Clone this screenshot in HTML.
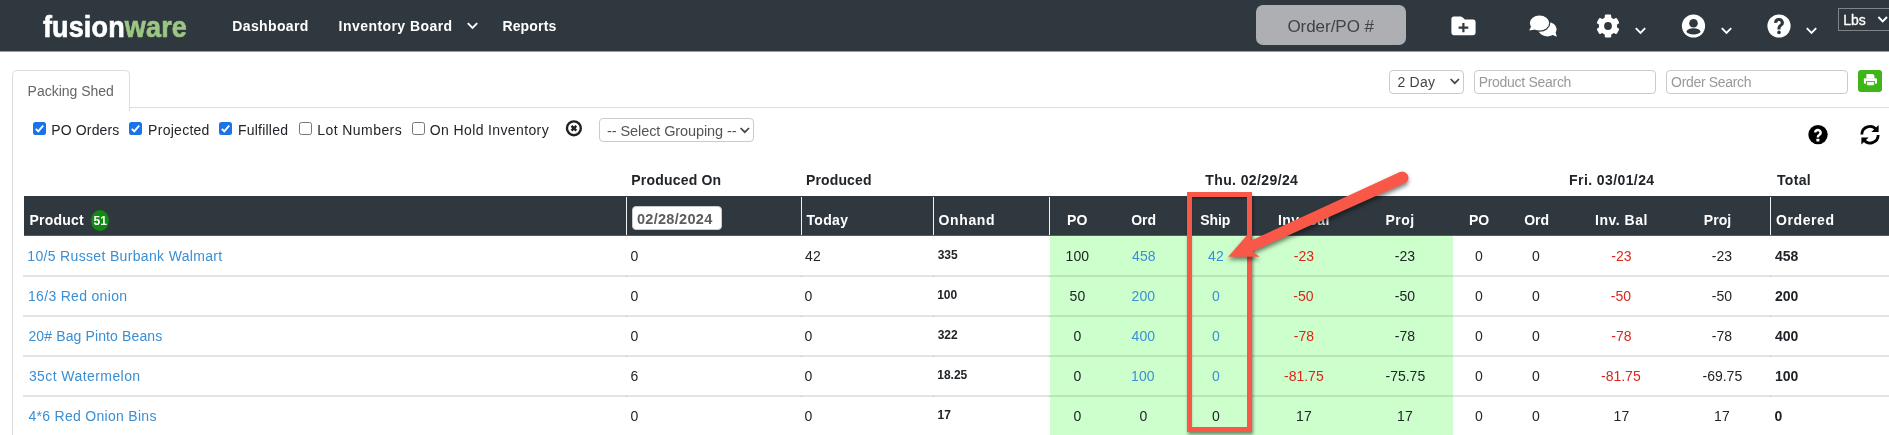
<!DOCTYPE html>
<html><head><meta charset="utf-8"><title>Inventory Board</title>
<style>
*{box-sizing:border-box;margin:0;padding:0}
html,body{width:1889px;height:435px;overflow:hidden;background:#fff}
body{font-family:"Liberation Sans",sans-serif;font-size:14px;color:#212529;position:relative;opacity:.999}
.a{position:absolute}
.t{position:absolute;line-height:16px;white-space:nowrap}
.box{position:absolute;border:1px solid #cbcbcb;border-radius:4px;background:#fff}
.rl{position:absolute;left:23px;width:1866px;height:2px;background:#e4e4e4}
.vs{position:absolute;top:197px;width:1px;height:38px;background:#f2f2f2}
.cb{position:absolute;top:122px;width:13px;height:13px;border-radius:2.5px}
.cb.on{background:#1a73e8}
.cb.off{border:1px solid #767676;background:#fff}
#lg span{color:#9cc683;-webkit-text-stroke-color:#9cc683}
</style></head><body>
<div class="a" style="left:0;top:0;width:1889px;height:52px;background:#9a9da0"></div>
<div class="a" style="left:0;top:0;width:1889px;height:51px;background:#2f383e"></div>
<svg class="a" style="left:466px;top:21px" width="13" height="10" viewBox="0 0 13 10"><path d="M1.8 2.2 L6.5 6.9 L11.2 2.2" fill="none" stroke="#fff" stroke-width="1.9"/></svg>
<div class="a" style="left:1256px;top:5px;width:150px;height:40px;background:#adafb2;border-radius:7px"></div>
<!-- nav icons -->
<svg class="a" style="left:1451px;top:16px" width="26" height="20" viewBox="1451 16 26 20"><path d="M1453.9 16.4 H1460.6 Q1461.6 16.4 1462.4 17.2 L1464.9 19.6 H1473.2 Q1475.6 19.6 1475.6 22 V32.8 Q1475.6 35.2 1473.2 35.2 H1453.8 Q1451.4 35.2 1451.4 32.8 V18.9 Q1451.4 16.4 1453.9 16.4 Z" fill="#fff"/><path d="M1463.4 22.9 V32.2 M1458.6 27.6 H1468.3" stroke="#2f383e" stroke-width="2.2"/></svg>
<svg class="a" style="left:1528px;top:14px" width="31" height="24" viewBox="1528 14 31 24"><ellipse cx="1547.4" cy="29.2" rx="9.2" ry="7.2" fill="#fff"/><path d="M1551.5 34.5 L1556.9 36.7 L1555.2 31.5 Z" fill="#fff"/><ellipse cx="1539.5" cy="23" rx="10.9" ry="8.7" fill="#2f383e"/><ellipse cx="1539.5" cy="23" rx="9.7" ry="7.5" fill="#fff"/><path d="M1531.2 26.2 L1529.2 30.6 L1535.2 29.6 Z" fill="#fff"/></svg>
<svg class="a" style="left:1596px;top:14px" width="24" height="24" viewBox="0 0 24 24"><g fill="#fff"><circle cx="12" cy="12" r="9.1"/><rect x="8.8" y="0.5" width="6.4" height="23" rx="1.3"/><rect x="8.8" y="0.5" width="6.4" height="23" rx="1.3" transform="rotate(60 12 12)"/><rect x="8.8" y="0.5" width="6.4" height="23" rx="1.3" transform="rotate(120 12 12)"/></g><circle cx="12" cy="12" r="3.9" fill="#2f383e"/></svg>
<svg class="a" style="left:1634px;top:26px" width="13" height="10" viewBox="0 0 13 10"><path d="M1.8 2.2 L6.5 6.9 L11.2 2.2" fill="none" stroke="#fff" stroke-width="1.9"/></svg>
<svg class="a" style="left:1681px;top:14px" width="25" height="24" viewBox="-0.5 0 25 24"><circle cx="12" cy="12" r="11.6" fill="#fff"/><circle cx="12" cy="9.3" r="4.3" fill="#2f383e"/><ellipse cx="12" cy="17.4" rx="6.9" ry="3.1" fill="#2f383e"/></svg>
<svg class="a" style="left:1719.5px;top:26px" width="13" height="10" viewBox="0 0 13 10"><path d="M1.8 2.2 L6.5 6.9 L11.2 2.2" fill="none" stroke="#fff" stroke-width="1.9"/></svg>
<svg class="a" style="left:1767px;top:14px" width="24" height="24" viewBox="0 0 24 24"><circle cx="12" cy="12" r="11.6" fill="#fff"/><path d="M8.7 8.9 A3.3 3.2 0 1 1 13.6 11.5 Q12 12.5 12 14 V15.4" fill="none" stroke="#2f383e" stroke-width="3.1"/><circle cx="12" cy="18.4" r="1.8" fill="#2f383e"/></svg>
<svg class="a" style="left:1805.3px;top:26px" width="13" height="10" viewBox="0 0 13 10"><path d="M1.8 2.2 L6.5 6.9 L11.2 2.2" fill="none" stroke="#fff" stroke-width="1.9"/></svg>
<div class="a" style="left:1838px;top:8px;width:60px;height:23px;border:1px solid #7f8489;background:#2f383e"></div>
<svg class="a" style="left:1877px;top:15px" width="12" height="9" viewBox="0 0 12 9"><path d="M1.4 2 L5.7 6.3 L10 2" fill="none" stroke="#fff" stroke-width="1.9"/></svg>

<!-- tab -->
<div class="a" style="left:12px;top:107px;width:1877px;height:1px;background:#dddddd"></div>
<div class="a" style="left:12px;top:107px;width:1px;height:330px;background:#dddddd"></div>
<div class="a" style="left:12px;top:70px;width:118px;height:41px;border:1px solid #dddddd;border-bottom:none;border-radius:5px 5px 0 0;background:#fff"></div>

<!-- search row -->
<div class="box" style="left:1389px;top:70px;width:75px;height:24px"></div>
<svg class="a" style="left:1449px;top:77px" width="12" height="9" viewBox="0 0 12 9"><path d="M1.6 2 L5.8 6.2 L10 2" fill="none" stroke="#444" stroke-width="1.7"/></svg>
<div class="box" style="left:1474px;top:70px;width:182px;height:24px"></div>
<div class="box" style="left:1666px;top:70px;width:182px;height:24px"></div>
<div class="a" style="left:1858px;top:70px;width:24px;height:22px;background:#3fb618;border-radius:3px"></div>
<svg class="a" style="left:1863px;top:73px" width="15" height="14" viewBox="1863 73 15 14"><path d="M1866.4 73.9 H1872.9 L1874.4 75.4 V78.4 H1866.4 Z" fill="#fff"/><rect x="1863.9" y="78.2" width="13.1" height="5.6" rx="1.1" fill="#fff"/><rect x="1866.4" y="81.6" width="8" height="4.2" fill="#fff" stroke="#3fb618" stroke-width="1"/></svg>

<!-- checkboxes -->
<div class="cb on" style="left:33px"></div>
<div class="cb on" style="left:129px"></div>
<div class="cb on" style="left:219px"></div>
<div class="cb off" style="left:299px"></div>
<div class="cb off" style="left:412px"></div>
<svg class="a" style="left:33px;top:122px" width="13" height="13" viewBox="0 0 13 13"><path d="M2.8 6.8 L5.3 9.3 L10.2 3.6" fill="none" stroke="#fff" stroke-width="1.9"/></svg>
<svg class="a" style="left:129px;top:122px" width="13" height="13" viewBox="0 0 13 13"><path d="M2.8 6.8 L5.3 9.3 L10.2 3.6" fill="none" stroke="#fff" stroke-width="1.9"/></svg>
<svg class="a" style="left:219px;top:122px" width="13" height="13" viewBox="0 0 13 13"><path d="M2.8 6.8 L5.3 9.3 L10.2 3.6" fill="none" stroke="#fff" stroke-width="1.9"/></svg>
<svg class="a" style="left:565px;top:119px" width="18" height="18" viewBox="565 119 18 18"><circle cx="573.9" cy="128.3" r="6.95" fill="#fff" stroke="#222" stroke-width="2.4"/><path d="M571.5 125.9 L576.3 130.7 M576.3 125.9 L571.5 130.7" stroke="#222" stroke-width="2.4"/></svg>
<div class="box" style="left:599px;top:118px;width:155px;height:24px"></div>
<svg class="a" style="left:739px;top:126px" width="12" height="9" viewBox="0 0 12 9"><path d="M1.6 2 L5.8 6.2 L10 2" fill="none" stroke="#444" stroke-width="1.7"/></svg>

<!-- right icons -->
<svg class="a" style="left:1807px;top:123px" width="23" height="23" viewBox="1807 123 23 23"><circle cx="1818" cy="134.65" r="9.7" fill="#000"/><path d="M1815.2 132.6 A2.7 2.6 0 1 1 1819.2 134.9 Q1817.9 135.7 1817.9 136.8 V137.4" fill="none" stroke="#fff" stroke-width="2.4"/><rect x="1816.4" y="138.7" width="3" height="2.8" rx="0.5" fill="#fff"/></svg>
<svg class="a" style="left:1859px;top:123px" width="23" height="23" viewBox="1859 123 23 23"><path d="M1861.8 134.5 A8.1 8.1 0 0 1 1876.4 129.8" fill="none" stroke="#000" stroke-width="2.8"/><path d="M1878.6 124.9 V132.1 H1871.4 Z" fill="#000"/><path d="M1878.2 135 A8.1 8.1 0 0 1 1863.6 139.7" fill="none" stroke="#000" stroke-width="2.8"/><path d="M1861.4 144.6 V137.4 H1868.6 Z" fill="#000"/></svg>

<!-- table header -->
<div class="a" style="left:24px;top:196px;width:1865px;height:40px;background:#555d62"></div>
<div class="a" style="left:24px;top:196px;width:1865px;height:39px;background:#2f383e"></div>
<div class="a" style="left:91px;top:209.7px;width:18px;height:21px;border-radius:9px/10.5px;background:#128912"></div>
<div class="vs" style="left:626px"></div>
<div class="vs" style="left:801px"></div>
<div class="vs" style="left:933px"></div>
<div class="vs" style="left:1049px"></div>
<div class="vs" style="left:1770px"></div>
<div class="a" style="left:632px;top:206px;width:90px;height:24px;background:#fff;border:1px solid #ccc;border-radius:4px"></div>

<!-- rows -->
<div class="a" style="left:1050px;top:236px;width:402.5px;height:200px;background:#ccffcc"></div>
<div class="rl" style="top:275px"></div>
<div class="rl" style="top:315px"></div>
<div class="rl" style="top:355px"></div>
<div class="rl" style="top:395px"></div>
<div class="a" style="left:1050px;top:275px;width:402.5px;height:2px;background:#b8e6b8"></div>
<div class="a" style="left:1050px;top:315px;width:402.5px;height:2px;background:#b8e6b8"></div>
<div class="a" style="left:1050px;top:355px;width:402.5px;height:2px;background:#b8e6b8"></div>
<div class="a" style="left:1050px;top:395px;width:402.5px;height:2px;background:#b8e6b8"></div>
<div class="a" style="left:626px;top:275.5px;width:1px;height:1px;background:#bdbdbd"></div>
<div class="a" style="left:801px;top:275.5px;width:1px;height:1px;background:#bdbdbd"></div>
<div class="a" style="left:933px;top:275.5px;width:1px;height:1px;background:#bdbdbd"></div>
<div class="a" style="left:1049px;top:275.5px;width:1px;height:1px;background:#bdbdbd"></div>
<div class="a" style="left:1770px;top:275.5px;width:1px;height:1px;background:#bdbdbd"></div>
<div class="a" style="left:626px;top:315.5px;width:1px;height:1px;background:#bdbdbd"></div>
<div class="a" style="left:801px;top:315.5px;width:1px;height:1px;background:#bdbdbd"></div>
<div class="a" style="left:933px;top:315.5px;width:1px;height:1px;background:#bdbdbd"></div>
<div class="a" style="left:1049px;top:315.5px;width:1px;height:1px;background:#bdbdbd"></div>
<div class="a" style="left:1770px;top:315.5px;width:1px;height:1px;background:#bdbdbd"></div>
<div class="a" style="left:626px;top:355.5px;width:1px;height:1px;background:#bdbdbd"></div>
<div class="a" style="left:801px;top:355.5px;width:1px;height:1px;background:#bdbdbd"></div>
<div class="a" style="left:933px;top:355.5px;width:1px;height:1px;background:#bdbdbd"></div>
<div class="a" style="left:1049px;top:355.5px;width:1px;height:1px;background:#bdbdbd"></div>
<div class="a" style="left:1770px;top:355.5px;width:1px;height:1px;background:#bdbdbd"></div>
<div class="a" style="left:626px;top:395.5px;width:1px;height:1px;background:#bdbdbd"></div>
<div class="a" style="left:801px;top:395.5px;width:1px;height:1px;background:#bdbdbd"></div>
<div class="a" style="left:933px;top:395.5px;width:1px;height:1px;background:#bdbdbd"></div>
<div class="a" style="left:1049px;top:395.5px;width:1px;height:1px;background:#bdbdbd"></div>
<div class="a" style="left:1770px;top:395.5px;width:1px;height:1px;background:#bdbdbd"></div>

<div class="t" id="lg" style="left:42.90px;top:19.54px;font-size:27px;color:#fff;font-weight:bold;-webkit-text-stroke:0.6px #fff;transform:scaleY(1.10);transform-origin:0 17.36px;letter-spacing:0.160px;">fusion<span>ware</span></div>
<div class="t" id="bdg" style="left:93.50px;top:212.84px;font-size:12px;color:#fff;font-weight:bold;">51</div>
<div class="t" id="n1" style="left:232.30px;top:17.75px;font-size:14px;color:#fff;font-weight:bold;letter-spacing:0.360px;">Dashboard</div>
<div class="t" id="n2" style="left:338.60px;top:17.75px;font-size:14px;color:#fff;font-weight:bold;letter-spacing:0.444px;">Inventory Board</div>
<div class="t" id="n3" style="left:502.40px;top:17.75px;font-size:14px;color:#fff;font-weight:bold;letter-spacing:0.165px;">Reports</div>
<div class="t" id="opo" style="left:1287.40px;top:18.91px;font-size:17px;color:#3d4349;letter-spacing:-0.040px;">Order/PO #</div>
<div class="t" id="lbs" style="left:1843.20px;top:12.15px;font-size:14px;color:#fff;-webkit-text-stroke:0.3px #fff;">Lbs</div>
<div class="t" id="tab" style="left:27.60px;top:83.35px;font-size:14px;color:#666;letter-spacing:-0.008px;">Packing Shed</div>
<div class="t" id="s1" style="left:1397.40px;top:74.45px;font-size:14px;color:#444;letter-spacing:0.248px;">2 Day</div>
<div class="t" id="s2" style="left:1478.70px;top:73.95px;font-size:14px;color:#999;letter-spacing:-0.291px;">Product Search</div>
<div class="t" id="s3" style="left:1671.10px;top:73.95px;font-size:14px;color:#999;letter-spacing:-0.335px;">Order Search</div>
<div class="t" id="c1" style="left:51.30px;top:121.75px;font-size:14px;color:#212529;letter-spacing:0.135px;">PO Orders</div>
<div class="t" id="c2" style="left:148.10px;top:121.75px;font-size:14px;color:#212529;letter-spacing:0.270px;">Projected</div>
<div class="t" id="c3" style="left:237.90px;top:121.75px;font-size:14px;color:#212529;letter-spacing:0.236px;">Fulfilled</div>
<div class="t" id="c4" style="left:317.30px;top:121.75px;font-size:14px;color:#212529;letter-spacing:0.423px;">Lot Numbers</div>
<div class="t" id="c5" style="left:429.80px;top:121.75px;font-size:14px;color:#212529;letter-spacing:0.377px;">On Hold Inventory</div>
<div class="t" id="sg" style="left:607.10px;top:122.98px;font-size:14.5px;color:#555;letter-spacing:-0.095px;">-- Select Grouping --</div>
<div class="t" id="g1" style="left:631.30px;top:172.35px;font-size:14px;color:#212529;font-weight:bold;letter-spacing:0.198px;">Produced On</div>
<div class="t" id="g2" style="left:806.00px;top:172.35px;font-size:14px;color:#212529;font-weight:bold;letter-spacing:0.129px;">Produced</div>
<div class="t" id="g3" style="left:1205.30px;top:172.35px;font-size:14px;color:#212529;font-weight:bold;letter-spacing:0.390px;">Thu. 02/29/24</div>
<div class="t" id="g4" style="left:1569.10px;top:172.35px;font-size:14px;color:#212529;font-weight:bold;letter-spacing:0.405px;">Fri. 03/01/24</div>
<div class="t" id="g5" style="left:1776.90px;top:172.35px;font-size:14px;color:#212529;font-weight:bold;letter-spacing:0.360px;">Total</div>
<div class="t" id="h0" style="left:29.40px;top:212.15px;font-size:14px;color:#fff;font-weight:bold;letter-spacing:0.240px;">Product</div>
<div class="t" id="hd" style="left:636.90px;top:211.18px;font-size:14.5px;color:#5c5c5c;font-weight:bold;letter-spacing:0.310px;">02/28/2024</div>
<div class="t" id="h1" style="left:806.40px;top:211.75px;font-size:14px;color:#fff;font-weight:bold;letter-spacing:0.360px;">Today</div>
<div class="t" id="h2" style="left:938.50px;top:211.75px;font-size:14px;color:#fff;font-weight:bold;letter-spacing:0.630px;">Onhand</div>
<div class="t" id="h3" style="left:1067.10px;top:211.75px;font-size:14px;color:#fff;font-weight:bold;">PO</div>
<div class="t" id="h4" style="left:1131.20px;top:211.75px;font-size:14px;color:#fff;font-weight:bold;">Ord</div>
<div class="t" id="h5" style="left:1200.30px;top:211.75px;font-size:14px;color:#fff;font-weight:bold;letter-spacing:-0.090px;">Ship</div>
<div class="t" id="h6" style="left:1277.90px;top:211.75px;font-size:14px;color:#fff;font-weight:bold;letter-spacing:0.399px;">Inv. Bal</div>
<div class="t" id="h7" style="left:1385.60px;top:211.75px;font-size:14px;color:#fff;font-weight:bold;letter-spacing:0.420px;">Proj</div>
<div class="t" id="h8" style="left:1469.00px;top:211.75px;font-size:14px;color:#fff;font-weight:bold;">PO</div>
<div class="t" id="h9" style="left:1524.20px;top:211.75px;font-size:14px;color:#fff;font-weight:bold;">Ord</div>
<div class="t" id="h10" style="left:1595.10px;top:211.75px;font-size:14px;color:#fff;font-weight:bold;letter-spacing:0.501px;">Inv. Bal</div>
<div class="t" id="h11" style="left:1703.80px;top:211.75px;font-size:14px;color:#fff;font-weight:bold;letter-spacing:0.060px;">Proj</div>
<div class="t" id="h12" style="left:1776.00px;top:211.75px;font-size:14px;color:#fff;font-weight:bold;letter-spacing:0.600px;">Ordered</div>
<div class="t" id="r0a" style="left:27.30px;top:248.35px;font-size:14px;color:#3a8fd4;letter-spacing:0.336px;">10/5 Russet Burbank Walmart</div>
<div class="t" id="r0b0" style="left:630.60px;top:248.35px;font-size:14px;color:#212529;">0</div>
<div class="t" id="r0b1" style="left:805.10px;top:248.35px;font-size:14px;color:#212529;">42</div>
<div class="t" id="r0c" style="left:937.69px;top:246.94px;font-size:12px;color:#212529;font-weight:bold;">335</div>
<div class="t" id="r0n0" style="left:1065.60px;top:248.35px;font-size:14px;color:#212529;">100</div>
<div class="t" id="r0n1" style="left:1132.10px;top:248.35px;font-size:14px;color:#3a8fd4;">458</div>
<div class="t" id="r0n2" style="left:1208.10px;top:248.35px;font-size:14px;color:#3a8fd4;">42</div>
<div class="t" id="r0n3" style="left:1293.85px;top:248.35px;font-size:14px;color:#dc261b;">-23</div>
<div class="t" id="r0n4" style="left:1394.85px;top:248.35px;font-size:14px;color:#212529;">-23</div>
<div class="t" id="r0n5" style="left:1475.10px;top:248.35px;font-size:14px;color:#212529;">0</div>
<div class="t" id="r0n6" style="left:1532.10px;top:248.35px;font-size:14px;color:#212529;">0</div>
<div class="t" id="r0n7" style="left:1611.35px;top:248.35px;font-size:14px;color:#dc261b;">-23</div>
<div class="t" id="r0n8" style="left:1711.85px;top:248.35px;font-size:14px;color:#212529;">-23</div>
<div class="t" id="r0z" style="left:1775.00px;top:248.35px;font-size:14px;color:#212529;font-weight:bold;">458</div>
<div class="t" id="r1a" style="left:28.00px;top:288.35px;font-size:14px;color:#3a8fd4;letter-spacing:0.312px;">16/3 Red onion</div>
<div class="t" id="r1b0" style="left:630.60px;top:288.35px;font-size:14px;color:#212529;">0</div>
<div class="t" id="r1b1" style="left:804.60px;top:288.35px;font-size:14px;color:#212529;">0</div>
<div class="t" id="r1c" style="left:937.19px;top:286.94px;font-size:12px;color:#212529;font-weight:bold;">100</div>
<div class="t" id="r1n0" style="left:1069.60px;top:288.35px;font-size:14px;color:#212529;">50</div>
<div class="t" id="r1n1" style="left:1131.60px;top:288.35px;font-size:14px;color:#3a8fd4;">200</div>
<div class="t" id="r1n2" style="left:1212.10px;top:288.35px;font-size:14px;color:#3a8fd4;">0</div>
<div class="t" id="r1n3" style="left:1293.35px;top:288.35px;font-size:14px;color:#dc261b;">-50</div>
<div class="t" id="r1n4" style="left:1394.85px;top:288.35px;font-size:14px;color:#212529;">-50</div>
<div class="t" id="r1n5" style="left:1475.10px;top:288.35px;font-size:14px;color:#212529;">0</div>
<div class="t" id="r1n6" style="left:1532.10px;top:288.35px;font-size:14px;color:#212529;">0</div>
<div class="t" id="r1n7" style="left:1610.85px;top:288.35px;font-size:14px;color:#dc261b;">-50</div>
<div class="t" id="r1n8" style="left:1711.85px;top:288.35px;font-size:14px;color:#212529;">-50</div>
<div class="t" id="r1z" style="left:1775.00px;top:288.35px;font-size:14px;color:#212529;font-weight:bold;">200</div>
<div class="t" id="r2a" style="left:28.40px;top:328.35px;font-size:14px;color:#3a8fd4;letter-spacing:0.130px;">20# Bag Pinto Beans</div>
<div class="t" id="r2b0" style="left:630.60px;top:328.35px;font-size:14px;color:#212529;">0</div>
<div class="t" id="r2b1" style="left:804.60px;top:328.35px;font-size:14px;color:#212529;">0</div>
<div class="t" id="r2c" style="left:937.69px;top:326.94px;font-size:12px;color:#212529;font-weight:bold;">322</div>
<div class="t" id="r2n0" style="left:1073.60px;top:328.35px;font-size:14px;color:#212529;">0</div>
<div class="t" id="r2n1" style="left:1131.60px;top:328.35px;font-size:14px;color:#3a8fd4;">400</div>
<div class="t" id="r2n2" style="left:1212.10px;top:328.35px;font-size:14px;color:#3a8fd4;">0</div>
<div class="t" id="r2n3" style="left:1293.85px;top:328.35px;font-size:14px;color:#dc261b;">-78</div>
<div class="t" id="r2n4" style="left:1394.85px;top:328.35px;font-size:14px;color:#212529;">-78</div>
<div class="t" id="r2n5" style="left:1475.10px;top:328.35px;font-size:14px;color:#212529;">0</div>
<div class="t" id="r2n6" style="left:1532.10px;top:328.35px;font-size:14px;color:#212529;">0</div>
<div class="t" id="r2n7" style="left:1611.35px;top:328.35px;font-size:14px;color:#dc261b;">-78</div>
<div class="t" id="r2n8" style="left:1711.85px;top:328.35px;font-size:14px;color:#212529;">-78</div>
<div class="t" id="r2z" style="left:1775.00px;top:328.35px;font-size:14px;color:#212529;font-weight:bold;">400</div>
<div class="t" id="r3a" style="left:28.90px;top:368.35px;font-size:14px;color:#3a8fd4;letter-spacing:0.424px;">35ct Watermelon</div>
<div class="t" id="r3b0" style="left:630.60px;top:368.35px;font-size:14px;color:#212529;">6</div>
<div class="t" id="r3b1" style="left:804.60px;top:368.35px;font-size:14px;color:#212529;">0</div>
<div class="t" id="r3c" style="left:937.24px;top:366.94px;font-size:12px;color:#212529;font-weight:bold;">18.25</div>
<div class="t" id="r3n0" style="left:1073.60px;top:368.35px;font-size:14px;color:#212529;">0</div>
<div class="t" id="r3n1" style="left:1131.10px;top:368.35px;font-size:14px;color:#3a8fd4;">100</div>
<div class="t" id="r3n2" style="left:1212.10px;top:368.35px;font-size:14px;color:#3a8fd4;">0</div>
<div class="t" id="r3n3" style="left:1284.00px;top:368.35px;font-size:14px;color:#dc261b;">-81.75</div>
<div class="t" id="r3n4" style="left:1385.50px;top:368.35px;font-size:14px;color:#212529;">-75.75</div>
<div class="t" id="r3n5" style="left:1475.10px;top:368.35px;font-size:14px;color:#212529;">0</div>
<div class="t" id="r3n6" style="left:1532.10px;top:368.35px;font-size:14px;color:#212529;">0</div>
<div class="t" id="r3n7" style="left:1601.00px;top:368.35px;font-size:14px;color:#dc261b;">-81.75</div>
<div class="t" id="r3n8" style="left:1702.50px;top:368.35px;font-size:14px;color:#212529;">-69.75</div>
<div class="t" id="r3z" style="left:1775.00px;top:368.35px;font-size:14px;color:#212529;font-weight:bold;">100</div>
<div class="t" id="r4a" style="left:28.40px;top:408.35px;font-size:14px;color:#3a8fd4;letter-spacing:0.296px;">4*6 Red Onion Bins</div>
<div class="t" id="r4b0" style="left:630.60px;top:408.35px;font-size:14px;color:#212529;">0</div>
<div class="t" id="r4b1" style="left:804.60px;top:408.35px;font-size:14px;color:#212529;">0</div>
<div class="t" id="r4c" style="left:937.47px;top:406.94px;font-size:12px;color:#212529;font-weight:bold;">17</div>
<div class="t" id="r4n0" style="left:1073.60px;top:408.35px;font-size:14px;color:#212529;">0</div>
<div class="t" id="r4n1" style="left:1139.60px;top:408.35px;font-size:14px;color:#212529;">0</div>
<div class="t" id="r4n2" style="left:1212.10px;top:408.35px;font-size:14px;color:#212529;">0</div>
<div class="t" id="r4n3" style="left:1296.10px;top:408.35px;font-size:14px;color:#212529;">17</div>
<div class="t" id="r4n4" style="left:1397.10px;top:408.35px;font-size:14px;color:#212529;">17</div>
<div class="t" id="r4n5" style="left:1475.10px;top:408.35px;font-size:14px;color:#212529;">0</div>
<div class="t" id="r4n6" style="left:1532.10px;top:408.35px;font-size:14px;color:#212529;">0</div>
<div class="t" id="r4n7" style="left:1613.60px;top:408.35px;font-size:14px;color:#212529;">17</div>
<div class="t" id="r4n8" style="left:1714.10px;top:408.35px;font-size:14px;color:#212529;">17</div>
<div class="t" id="r4z" style="left:1774.40px;top:408.35px;font-size:14px;color:#212529;font-weight:bold;">0</div>
<div class="a" style="left:1187px;top:192px;width:65px;height:240px;border:5px solid #f95848;box-shadow:1px 2.5px 3px rgba(0,0,0,.45), inset 1px 2.5px 2px -1px rgba(0,0,0,.3)"></div>
<svg class="a" style="left:1200px;top:160px;overflow:visible;filter:drop-shadow(0.5px 3px 2px rgba(0,0,0,.5))" width="230" height="120" viewBox="1200 160 230 120"><path d="M1228.3 256.7 L1259.6 256.7 L1252.3 251.6 L1404.8 183.1 A6.00 6.00 0 0 0 1399.8 172.1 L1251.1 240.5 L1248.9 233.1 Z" fill="#f95848"/></svg>

</body></html>
